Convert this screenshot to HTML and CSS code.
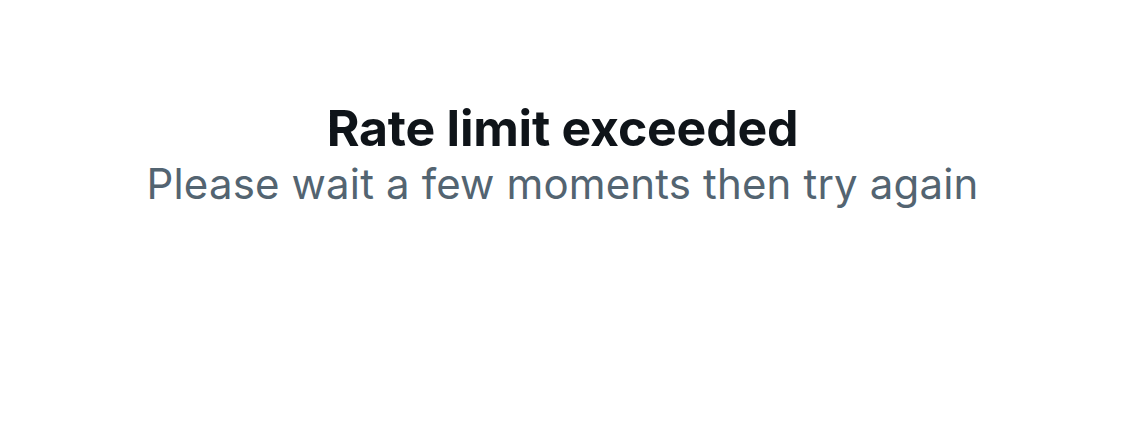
FILE: index.html
```html
<!DOCTYPE html>
<html lang="en">
<head>
<meta charset="utf-8">
<title>Rate limit exceeded</title>
<link rel="stylesheet" href="styles.css">
</head>
<body>
<main class="page">
  <section class="message">
    <h1 class="title">Rate limit exceeded</h1>
    <p class="subtitle">Please wait a few moments then try again</p>
  </section>
</main>
</body>
</html>
```

FILE: styles.css
```css
html, body {
  margin: 0;
  padding: 0;
  background: #ffffff;
}
.page {
  width: 1125px;
  height: 442px;
  display: flex;
  justify-content: center;
  font-family: Inter, "Liberation Sans", sans-serif;
}
.message {
  padding-top: 98px;
  display: flex;
  flex-direction: column;
  align-items: center;
}
.title {
  margin: 0;
  font-size: 50px;
  line-height: 60px;
  font-weight: 700;
  color: #0f1419;
  letter-spacing: -0.24px;
}
.subtitle {
  margin: 0;
  font-size: 42px;
  line-height: 52px;
  font-weight: 400;
  color: #536471;
  letter-spacing: 0.15px;
}
```
